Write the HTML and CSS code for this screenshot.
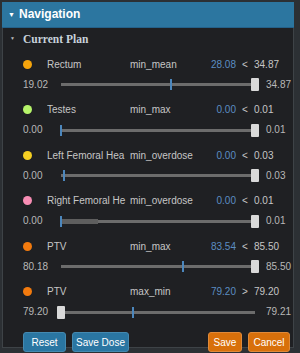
FILE: index.html
```html
<!DOCTYPE html>
<html lang="en">
<head>
    <meta charset="UTF-8">
    <title>Navigation</title>
    <link rel="stylesheet" href="styles.css">
</head>
<body>
    <div class="panel">
        <div class="header"><span class="caret">&#9660;</span>Navigation</div>
        <div class="section"><span class="caret-sm">&#9660;</span>Current Plan</div>

        <div class="rows">
            <div class="row">
                <div class="line">
                    <span class="dot" style="background:#f5a40c"></span>
                    <span class="name">Rectum</span>
                    <span class="metric">min_mean</span>
                    <span class="val">28.08</span>
                    <span class="op">&lt;</span>
                    <span class="goal">34.87</span>
                </div>
                <div class="bar">
                    <span class="min">19.02</span>
                    <div class="slider">
                        <div class="track"></div>
                        <div class="tick" style="left:111px"></div>
                        <div class="thumb" style="left:192px"></div>
                    </div>
                    <span class="max">34.87</span>
                </div>
            </div>

            <div class="row">
                <div class="line">
                    <span class="dot" style="background:#b6f46a"></span>
                    <span class="name">Testes</span>
                    <span class="metric">min_max</span>
                    <span class="val">0.00</span>
                    <span class="op">&lt;</span>
                    <span class="goal">0.01</span>
                </div>
                <div class="bar">
                    <span class="min">0.00</span>
                    <div class="slider">
                        <div class="track"></div>
                        <div class="tick" style="left:1px"></div>
                        <div class="thumb" style="left:192px"></div>
                    </div>
                    <span class="max">0.01</span>
                </div>
            </div>

            <div class="row">
                <div class="line">
                    <span class="dot" style="background:#f5cf22"></span>
                    <span class="name">Left Femoral Hea</span>
                    <span class="metric">min_overdose</span>
                    <span class="val">0.00</span>
                    <span class="op">&lt;</span>
                    <span class="goal">0.03</span>
                </div>
                <div class="bar">
                    <span class="min">0.00</span>
                    <div class="slider">
                        <div class="track"></div>
                        <div class="tick" style="left:4px"></div>
                        <div class="thumb" style="left:192px"></div>
                    </div>
                    <span class="max">0.03</span>
                </div>
            </div>

            <div class="row">
                <div class="line">
                    <span class="dot" style="background:#f78db4"></span>
                    <span class="name">Right Femoral He</span>
                    <span class="metric">min_overdose</span>
                    <span class="val">0.00</span>
                    <span class="op">&lt;</span>
                    <span class="goal">0.01</span>
                </div>
                <div class="bar">
                    <span class="min">0.00</span>
                    <div class="slider">
                        <div class="track"></div>
                        <div class="range" style="width:37px"></div>
                        <div class="tick" style="left:1px"></div>
                        <div class="thumb" style="left:192px"></div>
                    </div>
                    <span class="max">0.01</span>
                </div>
            </div>

            <div class="row">
                <div class="line">
                    <span class="dot" style="background:#f27a0e"></span>
                    <span class="name">PTV</span>
                    <span class="metric">min_max</span>
                    <span class="val">83.54</span>
                    <span class="op">&lt;</span>
                    <span class="goal">85.50</span>
                </div>
                <div class="bar">
                    <span class="min">80.18</span>
                    <div class="slider">
                        <div class="track"></div>
                        <div class="tick" style="left:123px"></div>
                        <div class="thumb" style="left:192px"></div>
                    </div>
                    <span class="max">85.50</span>
                </div>
            </div>

            <div class="row">
                <div class="line">
                    <span class="dot" style="background:#f27a0e"></span>
                    <span class="name">PTV</span>
                    <span class="metric">max_min</span>
                    <span class="val">79.20</span>
                    <span class="op">&gt;</span>
                    <span class="goal">79.20</span>
                </div>
                <div class="bar">
                    <span class="min">79.20</span>
                    <div class="slider">
                        <div class="track"></div>
                        <div class="tick" style="left:73px"></div>
                        <div class="thumb" style="left:-2px"></div>
                    </div>
                    <span class="max">79.21</span>
                </div>
            </div>
        </div>

        <div class="actions">
            <button class="btn blue reset">Reset</button>
            <button class="btn blue save-dose">Save Dose</button>
            <span class="spacer"></span>
            <button class="btn orange save">Save</button>
            <button class="btn orange cancel">Cancel</button>
        </div>
    </div>
</body>
</html>
```

FILE: styles.css
```css
body {
    margin: 0;
    background: #2c3034;
    font-family: "Liberation Sans", Arial, sans-serif;
    height: 353px;
    overflow: hidden;
}
.panel {
    margin: 2px 0 0 2px;
    width: 290px;
    height: 345px;
    background: #1f2023;
    border: 1px solid #3e4347;
    border-top: none;
}
.header {
    height: 25px;
    background: #2c76a0;
    color: #fff;
    font-weight: bold;
    font-size: 12px;
    line-height: 25px;
    display: flex;
    align-items: center;
    border-bottom: 1px solid #24618a;
    margin: 0 -1px;
}
.caret {
    font-size: 7px;
    width: 17px;
    padding-left: 6px;
    box-sizing: border-box;
}
.section {
    height: 19px;
    display: flex;
    align-items: center;
    padding-top: 1px;
    font-family: "Liberation Serif", "Times New Roman", serif;
    font-weight: bold;
    font-size: 11.5px;
    color: #c8d2db;
}
.caret-sm {
    font-size: 5px;
    color: #b9b9b9;
    width: 20px;
    padding-left: 7px;
    box-sizing: border-box;
}
.rows {
    padding: 8px 0 0 20px;
}
.row {
    height: 45.5px;
}
.line {
    height: 16px;
    display: flex;
    align-items: center;
    font-size: 10px;
    color: #c6c6c6;
    white-space: nowrap;
}
.dot {
    width: 9px;
    height: 9px;
    border-radius: 50%;
    margin-right: 15px;
    flex: none;
}
.name {
    flex: 0 0 83px;
    overflow: hidden;
}
.metric {
    width: 60px;
    flex: none;
}
.val {
    width: 46px;
    text-align: right;
    color: #5b8dc2;
    flex: none;
}
.op {
    width: 18px;
    text-align: center;
    flex: none;
}
.bar {
    height: 16px;
    margin-top: 4px;
    display: flex;
    align-items: center;
    font-size: 10px;
    color: #b8b8b8;
}
.min {
    width: 36px;
    flex: none;
}
.slider {
    position: relative;
    width: 200px;
    height: 16px;
    flex: none;
}
.track {
    position: absolute;
    left: 2px;
    right: 4px;
    top: 7px;
    height: 3px;
    background: #6c6c6c;
}
.range {
    position: absolute;
    left: 2px;
    top: 6px;
    height: 5px;
    background: #5e5e5e;
}
.tick {
    position: absolute;
    top: 3px;
    width: 2px;
    height: 11px;
    background: #4c87bd;
}
.thumb {
    position: absolute;
    top: 2px;
    width: 8px;
    height: 13px;
    background: #d9d9d9;
    border-radius: 1px;
}
.max {
    margin-left: 7px;
}
.actions {
    display: flex;
    padding: 0 3px 0 20px;
    margin-top: 3px;
    gap: 6px;
}
.spacer {
    flex: 1;
}
.btn {
    height: 20px;
    border: 1px solid #4489b0;
    border-radius: 3px;
    color: #fff;
    font-family: "Liberation Sans", Arial, sans-serif;
    font-size: 10px;
    padding: 0;
    cursor: pointer;
}
.reset {
    width: 43px;
}
.save-dose {
    width: 57px;
}
.save {
    width: 34px;
}
.cancel {
    width: 42px;
}
.blue {
    background: #2a76a2;
}
.orange {
    background: #d8700b;
    border-color: #e08a3a;
}
```
